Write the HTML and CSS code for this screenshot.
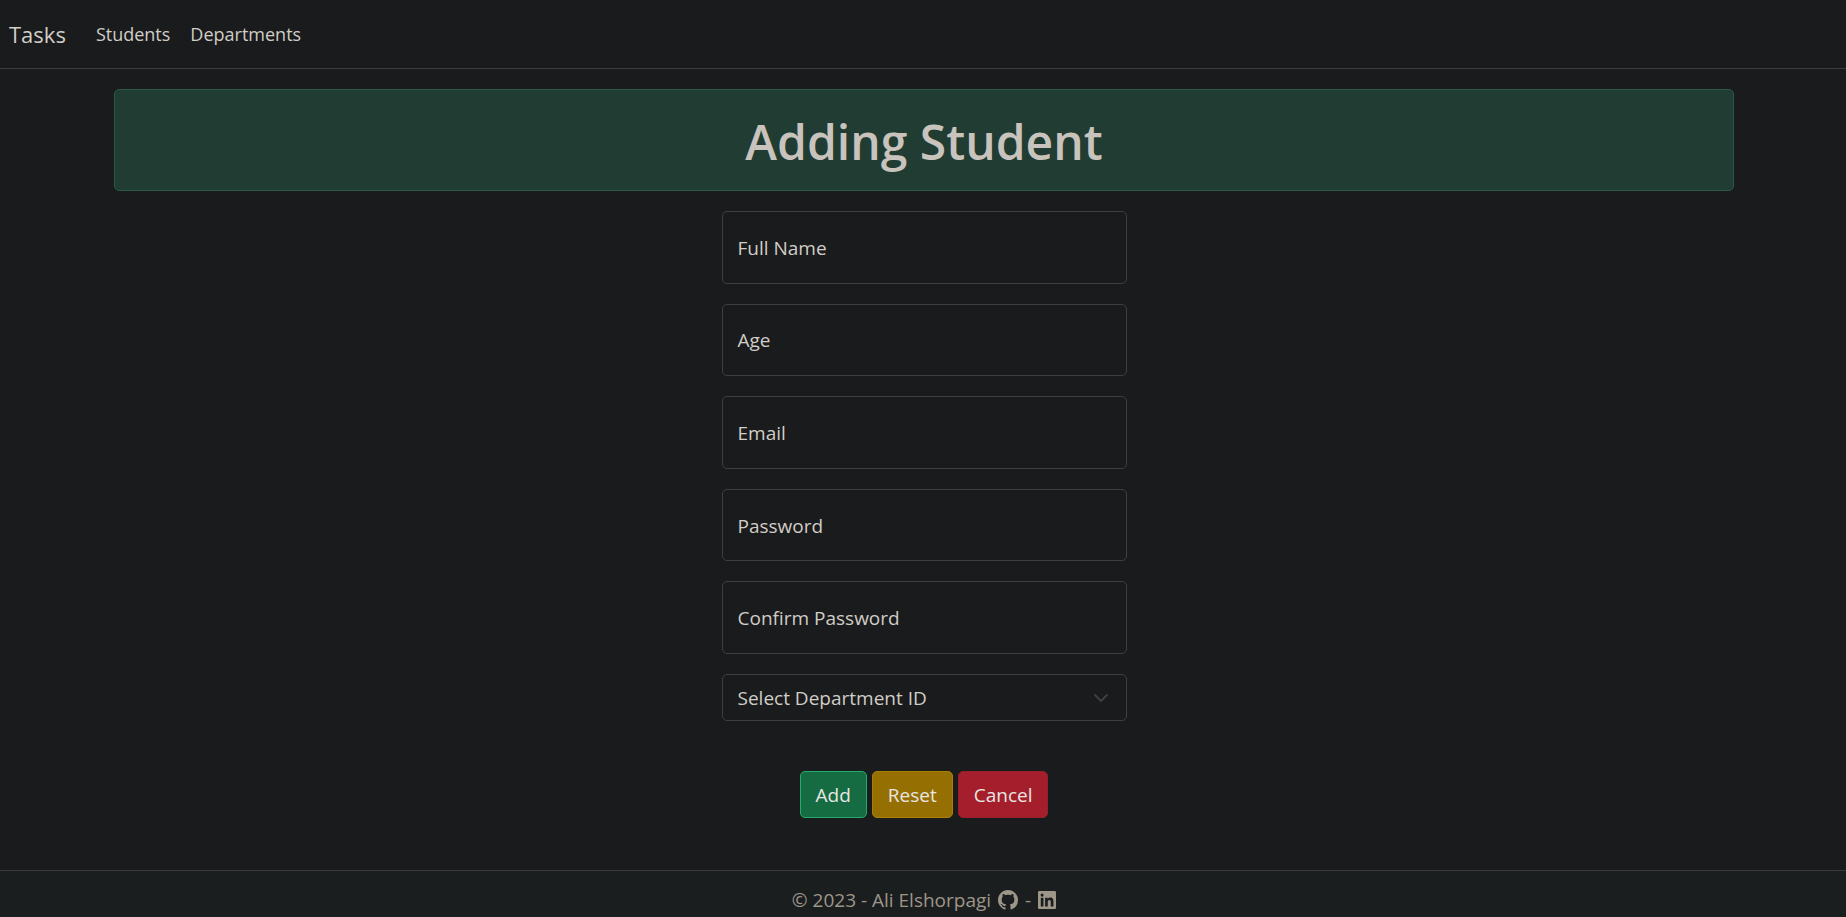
FILE: index.html
```html
<!DOCTYPE html>
<html lang="en">
<head>
<meta charset="utf-8">
<meta name="viewport" content="width=device-width, initial-scale=1">
<title>Adding Student</title>
<link rel="stylesheet" href="styles.css">
</head>
<body>
<nav class="navbar">
  <a class="brand" href="#">Tasks</a>
  <a class="nav-link" href="#">Students</a>
  <a class="nav-link" href="#">Departments</a>
</nav>
<main class="container">
  <h1 class="banner">Adding Student</h1>
  <form class="form">
    <div class="fields">
      <div class="field"><input class="control" type="text" id="name"><label class="label" for="name">Full Name</label></div>
      <div class="field"><input class="control" type="text" inputmode="numeric" id="age"><label class="label" for="age">Age</label></div>
      <div class="field"><input class="control" type="email" id="email"><label class="label" for="email">Email</label></div>
      <div class="field"><input class="control" type="password" id="password"><label class="label" for="password">Password</label></div>
      <div class="field"><input class="control" type="password" id="confirm"><label class="label" for="confirm">Confirm Password</label></div>
    </div>
    <div class="field">
      <select class="control select" aria-label="Department">
        <option>Select Department ID</option>
      </select>
      <svg class="chevron" viewBox="0 0 16 16" aria-hidden="true"><path d="m2 5 6 6 6-6"/></svg>
    </div>
    <div class="actions">
      <button class="btn btn-add" type="submit">Add</button>
      <button class="btn btn-reset" type="reset">Reset</button>
      <button class="btn btn-cancel" type="button">Cancel</button>
    </div>
  </form>
</main>
<footer class="footer">
  <span>© 2023 - Ali Elshorpagi</span>
  <a class="social" href="#" aria-label="GitHub"><svg class="icon" viewBox="0 0 16 16"><path d="M8 0C3.58 0 0 3.58 0 8c0 3.54 2.29 6.53 5.47 7.59.4.07.55-.17.55-.38 0-.19-.01-.82-.01-1.49-2.01.37-2.53-.49-2.69-.94-.09-.23-.48-.94-.82-1.13-.28-.15-.68-.52-.01-.53.63-.01 1.08.58 1.23.82.72 1.21 1.87.87 2.33.66.07-.52.28-.87.51-1.07-1.78-.2-3.64-.89-3.64-3.95 0-.87.31-1.59.82-2.15-.08-.2-.36-1.02.08-2.12 0 0 .67-.21 2.2.82.64-.18 1.32-.27 2-.27s1.36.09 2 .27c1.53-1.04 2.2-.82 2.2-.82.44 1.1.16 1.92.08 2.12.51.56.82 1.27.82 2.15 0 3.07-1.87 3.75-3.65 3.95.29.25.54.73.54 1.48 0 1.07-.01 1.93-.01 2.2 0 .21.15.46.55.38A8.01 8.01 0 0 0 16 8c0-4.42-3.58-8-8-8"/></svg></a>
  <span>-</span>
  <a class="social" href="#" aria-label="LinkedIn"><svg class="icon icon-square" viewBox="0 0 448 448"><path d="M416 0H32C14 0 0 15 0 33v382c0 18 14 33 32 33h384c18 0 32-15 32-33V33c0-18-14-33-32-33zM135 384H69V170h67v214zM102 141a38 38 0 1 1 0-77 38 38 0 0 1 0 77zM384 384h-66V280c0-25-1-57-35-57s-40 27-40 55v106h-66V170h64v29h1c9-17 31-35 63-35 67 0 79 45 79 103z"/></svg></a>
</footer>
</body>
</html>
```

FILE: styles.css
```css
* {
  box-sizing: border-box;
}

body {
  margin: 0;
  min-height: 100vh;
  display: flex;
  flex-direction: column;
  background: #191b1c;
  color: #d1cdc7;
  font-family: "Open Sans", "Noto Sans", sans-serif;
  font-size: 19px;
  line-height: 30px;
}

a {
  color: inherit;
  text-decoration: none;
}

.navbar {
  display: flex;
  align-items: center;
  gap: 20px;
  padding: 10px 9px;
  min-height: 69px;
  border-bottom: 1px solid #393d3f;
}

.brand {
  margin-right: 10px;
  font-size: 22px;
}

.nav-link {
  font-size: 18px;
}

.container {
  flex: 1;
  width: 100%;
  max-width: 1650px;
  margin: 0 auto;
  padding: 20px 14px 20px 16px;
}

.banner {
  margin: 0 0 20px;
  padding: 22px 20px 18px;
  border: 1px solid #2a5746;
  border-radius: 5px;
  background: #213c32;
  color: #c8c3bc;
  font-size: 48px;
  font-weight: 600;
  line-height: 60px;
  text-align: center;
}

.form {
  display: flex;
  flex-direction: column;
  gap: 20px;
  width: 25%;
  min-width: 320px;
  margin: 0 auto;
}

.fields {
  display: grid;
  grid-auto-rows: 1fr;
  gap: 20px;
  min-height: 443px;
}

.field {
  display: grid;
  align-items: center;
}

.control,
.label,
.chevron {
  grid-area: 1 / 1;
}

.control {
  align-self: stretch;
  width: 100%;
  padding: 8px 15px 7px;
  border: 1px solid #3c4042;
  border-radius: 5px;
  background: transparent;
  color: inherit;
  font: inherit;
}

.label {
  justify-self: start;
  padding: 1px 16px 0;
}

.select {
  appearance: none;
}

.chevron {
  justify-self: end;
  width: 16px;
  height: 16px;
  margin-right: 18px;
  fill: none;
  stroke: #3c4144;
  stroke-width: 2;
  stroke-linecap: round;
  stroke-linejoin: round;
  pointer-events: none;
}

.actions {
  display: flex;
  justify-content: center;
  gap: 5px;
  padding-top: 30px;
}

.btn {
  padding: 8px 15px 7px;
  border: 1px solid;
  border-radius: 5px;
  color: #e8e6e3;
  font: inherit;
}

.btn-add {
  border-color: #25a96c;
  background: #156c43;
}

.btn-reset {
  border-color: #aa7f06;
  background: #966f02;
}

.btn-cancel {
  border-color: #961f2b;
  background: #a51e2b;
}

.footer {
  display: flex;
  justify-content: center;
  gap: 7px;
  padding: 14px 13px 2px 15px;
  border-top: 1px solid #363c3d;
  background: #1b1e1f;
  color: #9e9689;
}

.social {
  display: flex;
  align-items: center;
}

.icon {
  width: 20px;
  height: 20px;
  fill: currentColor;
}

.icon-square {
  width: 18px;
  height: 18px;
}
```
